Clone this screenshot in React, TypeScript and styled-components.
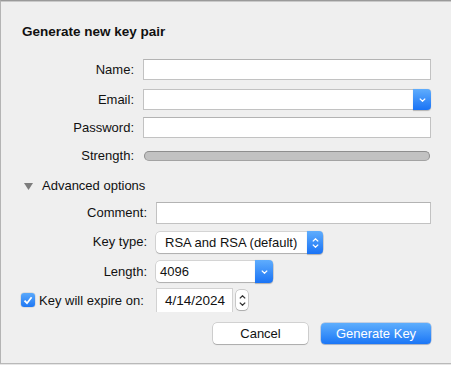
import React from 'react';
import styled, { createGlobalStyle } from 'styled-components';

const GlobalStyle = createGlobalStyle`
  html, body {
    margin: 0;
    padding: 0;
    background: #e6e6e6;
  }
  * { box-sizing: border-box; }
`;

/* ── Window ── */

const Window = styled.div`
  width: 451px;
  height: 364px;
  background: #efefef;
  border-top: 1px solid #9a9a9a;
  border-left: 1px solid #b4b4b4;
  border-bottom: 1px solid #b9b9b9;
  box-shadow: inset 0 1px 0 #c9c9c9;
  padding: 0 20px 0 20px;
  font-family: 'Liberation Sans', Arial, sans-serif;
  font-size: 13px;
  color: #111;
`;

const Title = styled.div`
  margin-top: 23px;
  height: 16px;
  line-height: 16px;
  font-weight: 700;
  font-size: 13.5px;
  padding-left: 1px;
`;

const Form = styled.div<{ $label: number; $rows: string; $top: number }>`
  display: grid;
  grid-template-columns: ${({ $label }) => $label}px 1fr;
  grid-template-rows: ${({ $rows }) => $rows};
  column-gap: 9px;
  margin-top: ${({ $top }) => $top}px;
  align-items: start;
`;

const Label = styled.div<{ $h?: number }>`
  text-align: right;
  height: ${({ $h }) => $h ?? 21}px;
  line-height: ${({ $h }) => $h ?? 21}px;
  white-space: nowrap;
`;

const TextField = styled.div<{ $h?: number }>`
  height: ${({ $h }) => $h ?? 21}px;
  background: #fff;
  border: 1px solid #c2c2c2;
  border-top-color: #b3b3b3;
`;

const Combo = styled.div`
  display: flex;
  height: 21px;
  background: #fff;
  border: 1px solid #c2c2c2;
  border-right: none;
  border-radius: 0 4px 4px 0;
`;

const ComboText = styled.div`
  flex: 1;
`;

const BlueCap = styled.div<{ $w: number }>`
  width: ${({ $w }) => $w}px;
  margin: -1px 0;
  display: flex;
  align-items: center;
  justify-content: center;
  flex-direction: column;
  gap: 2px;
  background: linear-gradient(#5fadfd, #1a73f5);
  border-radius: 0 4px 4px 0;
  box-shadow: 0 0.5px 1px rgba(0, 0, 0, 0.25);
`;

const StrengthBar = styled.div`
  margin-top: 6px;
  height: 10px;
  margin-left: 1px;
  margin-right: 1px;
  border-radius: 5px;
  background: #c2c2c2;
  border: 1px solid #8e8e8e;
  border-bottom-color: #a3a3a3;
`;

const Disclosure = styled.div`
  display: flex;
  align-items: center;
  gap: 9px;
  height: 16px;
  line-height: 16px;
  margin-top: 11px;
  padding-left: 3px;
`;

const Popup = styled.div<{ $w: number }>`
  display: flex;
  width: ${({ $w }) => $w}px;
  height: 21px;
  background: #fff;
  border-radius: 4px;
  box-shadow: 0 0 0 0.5px rgba(0, 0, 0, 0.22), 0 1px 1px rgba(0, 0, 0, 0.18);
`;

const PopupText = styled.div<{ $pad: number }>`
  flex: 1;
  padding-left: ${({ $pad }) => $pad}px;
  line-height: 21px;
  white-space: nowrap;
`;

const CheckLabel = styled.label`
  display: flex;
  align-items: center;
  gap: 4px;
  height: 24px;
  white-space: nowrap;
`;

const CheckBox = styled.span`
  width: 14px;
  height: 14px;
  border-radius: 3px;
  background: linear-gradient(#5aa9fb, #1f78f4);
  display: flex;
  align-items: center;
  justify-content: center;
  box-shadow: 0 0 0 0.5px rgba(0, 0, 0, 0.15);
`;

const DateRow = styled.div`
  display: flex;
  align-items: center;
  gap: 3px;
  height: 24px;
`;

const DateField = styled.div`
  width: 77px;
  height: 24px;
  background: #fff;
  border: 1px solid #d2d2d2;
  border-bottom: none;
  padding-left: 8px;
  line-height: 23px;
  font-size: 13.5px;
`;

const Stepper = styled.div`
  width: 12px;
  height: 20px;
  background: #fff;
  border-radius: 4px;
  box-shadow: 0 0 0 0.5px rgba(0, 0, 0, 0.3), 0 1px 1px rgba(0, 0, 0, 0.15);
  display: flex;
  flex-direction: column;
  align-items: center;
  justify-content: center;
  gap: 3px;
`;

const Buttons = styled.div`
  display: flex;
  justify-content: flex-end;
  gap: 13px;
  margin-top: 11px;
`;

const Button = styled.button<{ $primary?: boolean; $w: number }>`
  width: ${({ $w }) => $w}px;
  height: 21px;
  border: none;
  border-radius: 4px;
  font-family: inherit;
  font-size: 13px;
  padding: 0;
  color: ${({ $primary }) => ($primary ? '#fff' : '#111')};
  background: ${({ $primary }) =>
    $primary ? 'linear-gradient(#5eaefd, #1b76f6)' : '#fff'};
  box-shadow: ${({ $primary }) =>
    $primary
      ? '0 0 0 0.5px rgba(0, 60, 160, 0.35), 0 1px 1px rgba(0, 0, 0, 0.15)'
      : '0 0 0 0.5px rgba(0, 0, 0, 0.25), 0 1px 1px rgba(0, 0, 0, 0.18)'};
`;

/* ── Icons ── */

const Chevron = ({ up, color = '#fff' }: { up?: boolean; color?: string }) => (
  <svg width="7" height="4" viewBox="0 0 7 4">
    <path
      d={up ? 'M0.8 3.4 L3.5 0.8 L6.2 3.4' : 'M0.8 0.6 L3.5 3.2 L6.2 0.6'}
      fill="none"
      stroke={color}
      strokeWidth="1.3"
    />
  </svg>
);

const Triangle = () => (
  <svg width="9" height="7" viewBox="0 0 9 7">
    <path d="M0 0 H9 L4.5 7 Z" fill="#7d7d7d" />
  </svg>
);

const Check = () => (
  <svg width="10" height="9" viewBox="0 0 10 9">
    <path d="M1.5 4.6 L4 7.2 L8.6 1.2" fill="none" stroke="#fff" strokeWidth="1.8" />
  </svg>
);

/* ── Component ── */

const App: React.FC = () => (
  <>
    <GlobalStyle />
    <Window>
      <Title>Generate new key pair</Title>

      <Form $label={113} $rows="30px 28px 28px 22px" $top={19}>
        <Label>Name:</Label>
        <TextField />
        <Label>Email:</Label>
        <Combo>
          <ComboText />
          <BlueCap $w={18}>
            <Chevron />
          </BlueCap>
        </Combo>
        <Label>Password:</Label>
        <TextField />
        <Label>Strength:</Label>
        <StrengthBar />
      </Form>

      <Disclosure>
        <Triangle />
        <span>Advanced options</span>
      </Disclosure>

      <Form $label={126} $rows="30px 29px 27px 24px" $top={8}>
        <Label $h={22}>Comment:</Label>
        <TextField $h={22} />
        <Label $h={20}>Key type:</Label>
        <Popup $w={167}>
          <PopupText $pad={9}>RSA and RSA (default)</PopupText>
          <BlueCap $w={16}>
            <Chevron up />
            <Chevron />
          </BlueCap>
        </Popup>
        <Label>Length:</Label>
        <Popup $w={117}>
          <PopupText $pad={4}>4096</PopupText>
          <BlueCap $w={18}>
            <Chevron />
          </BlueCap>
        </Popup>
        <CheckLabel>
          <CheckBox>
            <Check />
          </CheckBox>
          Key will expire on:
        </CheckLabel>
        <DateRow>
          <DateField>4/14/2024</DateField>
          <Stepper>
            <Chevron up color="#333" />
            <Chevron color="#333" />
          </Stepper>
        </DateRow>
      </Form>

      <Buttons>
        <Button $w={95}>Cancel</Button>
        <Button $primary $w={110}>
          Generate Key
        </Button>
      </Buttons>
    </Window>
  </>
);

export default App;
